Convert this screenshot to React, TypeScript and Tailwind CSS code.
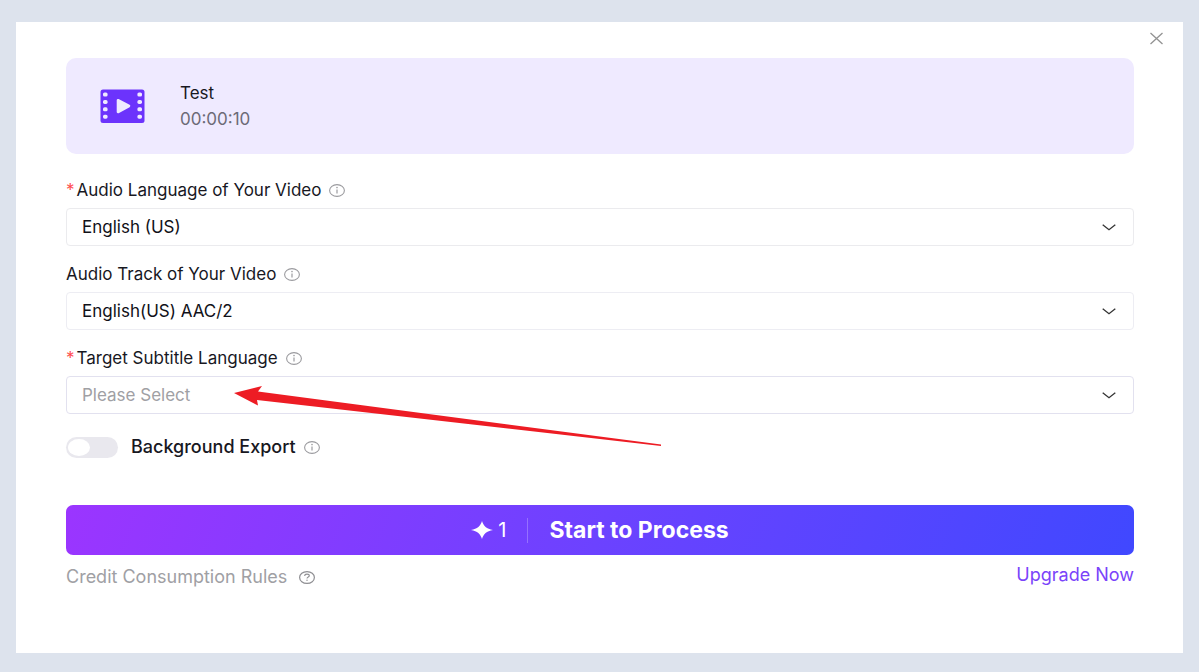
import React, { useState } from 'react';

const fields = [
  {
    id: 'audio-language',
    label: 'Audio Language of Your Video',
    required: true,
    value: 'English (US)',
    options: ['English (US)'],
    border: 'border-[#ebebee]',
  },
  {
    id: 'audio-track',
    label: 'Audio Track of Your Video',
    required: false,
    value: 'English(US) AAC/2',
    options: ['English(US) AAC/2'],
    border: 'border-[#ededf3]',
  },
  {
    id: 'subtitle-language',
    label: 'Target Subtitle Language',
    required: true,
    value: '',
    options: ['English (US)'],
    border: 'border-[#e2e1ef]',
  },
];

function InfoIcon() {
  return (
    <svg className="w-4 h-[13px] shrink-0" viewBox="0 0 16 13" fill="none" aria-hidden="true">
      <ellipse cx="8" cy="6.5" rx="7.4" ry="5.9" stroke="#9b9b9f" strokeWidth="1.1" />
      <path d="M8 5.4v4.2" stroke="#9b9b9f" strokeWidth="1.2" />
      <circle cx="8" cy="3.6" r="0.8" fill="#9b9b9f" />
    </svg>
  );
}

function QuestionIcon() {
  return (
    <svg className="w-4 h-[13px] shrink-0" viewBox="0 0 16 13" fill="none" aria-hidden="true">
      <ellipse cx="8" cy="6.5" rx="7.4" ry="5.9" stroke="#8f8f93" strokeWidth="1.2" />
      <path d="M5.7 5c0-1.2 1-1.9 2.3-1.9s2.3.7 2.3 1.7c0 1.3-2.3 1.2-2.3 2.7" stroke="#8f8f93" strokeWidth="1.1" />
      <circle cx="8" cy="9.2" r="0.7" fill="#8f8f93" />
    </svg>
  );
}

function VideoIcon() {
  return (
    <svg className="w-[45px] h-[35px] shrink-0" viewBox="0 0 45 35" aria-hidden="true">
      <rect x="0.5" y="0.5" width="44" height="33.5" rx="2.5" fill="#6c33fc" />
      {[5, 12.4, 19.8, 27.2].map((y) => (
        <g key={y} fill="#efeaff">
          <rect x="3" y={y - 1.5} width="4.6" height="4" rx="1.6" />
          <rect x="37.4" y={y - 1.5} width="4.6" height="4" rx="1.6" />
        </g>
      ))}
      <path d="M18 11.2L29 17L18 23Z" fill="#efeaff" stroke="#efeaff" strokeWidth="2.6" strokeLinejoin="round" />
    </svg>
  );
}

function Arrow() {
  return (
    <svg
      className="absolute left-[168px] top-2 w-[428px] h-[64px] pointer-events-none z-10"
      viewBox="0 0 428 64"
      aria-hidden="true"
    >
      <path d="M0 9L28 2L24 7.5L427 60.5V62L23 16L24 21.5Z" fill="#ed1c24" />
    </svg>
  );
}

export default function App() {
  const [values, setValues] = useState(fields.map((f) => f.value));
  const [background, setBackground] = useState(false);

  return (
    <div className="min-h-screen flex bg-[#dde3ed] px-4 pt-[22px] pb-[19px] font-['Inter',sans-serif] text-[17px] leading-6 text-[#18181f]">
      <main className="relative flex-1 bg-white pl-[50px] pr-[49px] pt-9 pb-12">
        <button type="button" aria-label="Close" className="absolute right-[19px] top-[9px] p-[1px]">
          <svg className="w-[13px] h-[13px]" viewBox="0 0 13 13" fill="none">
            <path d="M0.5 1L12.5 12M12.5 1L0.5 12" stroke="#929292" strokeWidth="1.3" />
          </svg>
        </button>

        <section className="flex items-center h-24 rounded-[10px] bg-[#efeaff] pl-[34px]">
          <VideoIcon />
          <div className="ml-[35px]">
            <div className="mb-[2px]">Test</div>
            <div className="text-[#6c6a77]">00:00:10</div>
          </div>
        </section>

        <form className="mt-6" onSubmit={(e) => e.preventDefault()}>
          <div className="flex flex-col gap-4">
            {fields.map((field, i) => (
              <div key={field.id}>
                <div className="flex items-center gap-2 mb-[6px]">
                  <label htmlFor={field.id} className="flex">
                    {field.required && <span className="mr-[2px] text-[#ff4d4f]">*</span>}
                    {field.label}
                  </label>
                  <InfoIcon />
                </div>
                <div className="relative">
                  <select
                    id={field.id}
                    value={values[i]}
                    onChange={(e) => setValues(values.map((v, n) => (n === i ? e.target.value : v)))}
                    className={`block w-full h-[38px] appearance-none rounded-[4px] border bg-white pl-[15px] pr-12 ${field.border} ${values[i] ? 'text-[#111118]' : 'text-[#a0a0a4]'}`}
                  >
                    {field.value === '' && <option value="">Please Select</option>}
                    {field.options.map((o) => (
                      <option key={o} value={o}>{o}</option>
                    ))}
                  </select>
                  <svg className="absolute right-[18px] top-4 w-[14px] h-[7px] pointer-events-none" viewBox="0 0 14 7" fill="none">
                    <path d="M0.7 0.8L7 5.7L13.3 0.8" stroke="#333" strokeWidth="1.3" />
                  </svg>
                  {field.id === 'subtitle-language' && <Arrow />}
                </div>
              </div>
            ))}
          </div>

          <div className="flex items-center gap-2 mt-[21px]">
            <label className="flex items-center cursor-pointer text-[18px] leading-6 font-medium">
              <input
                type="checkbox"
                role="switch"
                checked={background}
                onChange={(e) => setBackground(e.target.checked)}
                className="peer sr-only"
              />
              <span className="flex w-[52px] h-[21px] p-[2px] mr-[13px] rounded-full bg-[#e9e8ee] peer-checked:bg-[#6c33fc] peer-checked:justify-end">
                <span className="w-[22px] h-[17px] rounded-[50%] bg-white" />
              </span>
              Background Export
            </label>
            <InfoIcon />
          </div>

          <button
            type="submit"
            className="flex items-center justify-center w-full h-[50px] mt-[46px] rounded-[7px] bg-[linear-gradient(110deg,#9b35ff_0%,#6c42ff_50%,#4048ff_100%)] text-white"
          >
            <svg className="w-[22px] h-[18px] mr-[5px]" viewBox="0 0 22 18" aria-hidden="true">
              <path d="M11 0C12.5 5 15.5 7.8 22 9C15.5 10.2 12.5 13 11 18C9.5 13 6.5 10.2 0 9C6.5 7.8 9.5 5 11 0Z" fill="#fff" />
            </svg>
            <span className="text-[20px]">1</span>
            <span className="w-px h-[25px] mx-[21px] bg-white/25" />
            <span className="text-[23px] font-bold">Start to Process</span>
          </button>
        </form>

        <footer className="flex justify-between mt-2 text-[18px] leading-6">
          <div className="flex items-center gap-3 mt-[2px] text-[#a0a0a4]">
            Credit Consumption Rules
            <QuestionIcon />
          </div>
          <a href="#upgrade" className="text-[#7a43fa]">Upgrade Now</a>
        </footer>
      </main>
    </div>
  );
}
